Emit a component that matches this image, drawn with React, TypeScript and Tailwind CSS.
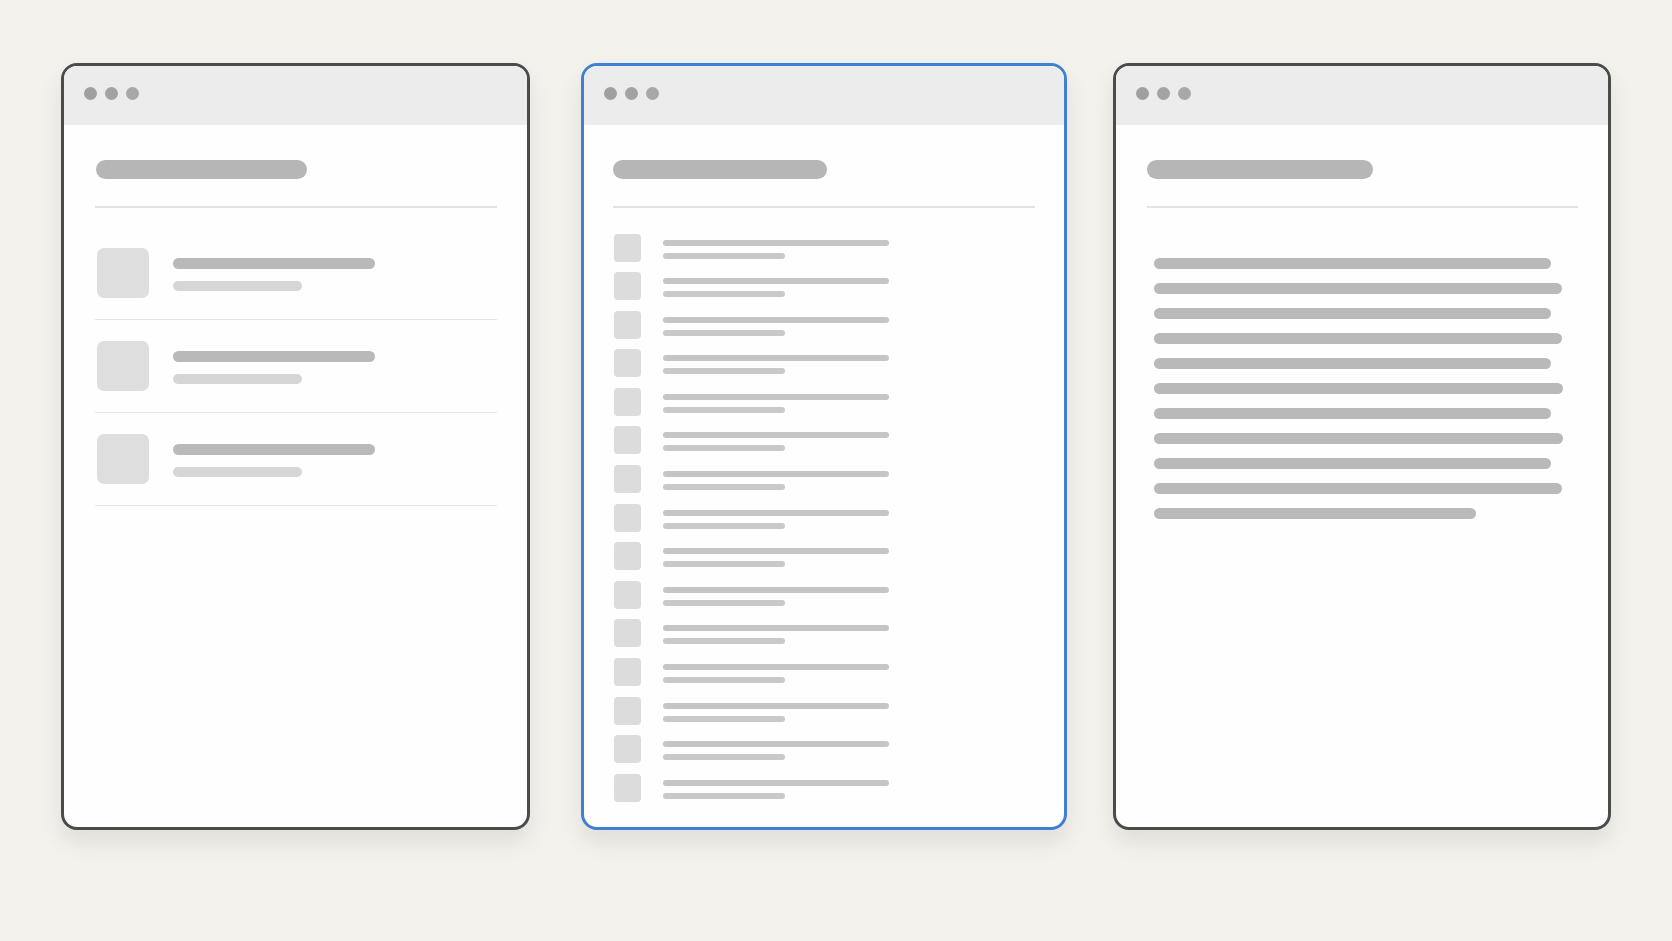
import type { ReactNode } from "react";

const textLineWidths = [397, 408, 397, 408, 397, 409, 397, 409, 397, 408, 322];
const denseRows = Array.from({ length: 15 }, (_, i) => i);
const cardRows = [0, 1, 2];

function WindowFrame({
  selected,
  width,
  children,
}: {
  selected?: boolean;
  width: string;
  children: ReactNode;
}) {
  return (
    <div
      className={`${width} h-[767px] shrink-0 overflow-hidden rounded-[16px] border-[3px] bg-[#fefefe] shadow-[0_12px_22px_rgba(60,50,40,0.10)] ${
        selected ? "border-[#3f80d2]" : "border-[#4b4b4b]"
      }`}
    >
      <div className="flex h-[59px] items-start gap-[8px] bg-[#ececec] pl-[20px] pt-[21px]">
        <span className="h-[13px] w-[13px] rounded-full bg-[#9f9f9f]" />
        <span className="h-[13px] w-[13px] rounded-full bg-[#a3a3a3]" />
        <span className="h-[13px] w-[13px] rounded-full bg-[#a8a8a8]" />
      </div>
      {children}
    </div>
  );
}

function CardListPanel() {
  return (
    <WindowFrame width="w-[469px]">
      <div className="pl-[31px] pr-[30px] pt-[35px]">
        <div className="ml-[1px] h-[19px] w-[211px] rounded-full bg-[#b6b6b6]" />
        <div className="mt-[27px] h-[1.5px] bg-[#e3e3e3]" />
        <div className="mt-[19px]">
          {cardRows.map((row) => (
            <div key={row} className="flex gap-[24px] border-b-[1.5px] border-[#e6e6e6] py-[21px] pl-[2px]">
              <div className="h-[50px] w-[52px] rounded-[7px] bg-[#dedede]" />
              <div className="flex flex-col gap-[12px] pt-[10px]">
                <div className="h-[11px] w-[202px] rounded-full bg-[#b9b9b9]" />
                <div className="h-[10px] w-[129px] rounded-full bg-[#d6d6d6]" />
              </div>
            </div>
          ))}
        </div>
      </div>
    </WindowFrame>
  );
}

function DenseListPanel() {
  return (
    <WindowFrame selected width="w-[486px]">
      <div className="pl-[29px] pr-[29px] pt-[35px]">
        <div className="h-[19px] w-[214px] rounded-full bg-[#b6b6b6]" />
        <div className="mt-[27px] h-[1.5px] bg-[#e3e3e3]" />
        <div className="mt-[26px] flex flex-col gap-[10.6px]">
          {denseRows.map((row) => (
            <div key={row} className="flex h-[28px] gap-[22px] pl-[1px]">
              <div className="h-[28px] w-[27px] rounded-[4px] bg-[#dcdcdc]" />
              <div className="flex flex-col gap-[7px] pt-[6px]">
                <div className="h-[6px] w-[226px] rounded-full bg-[#c5c5c5]" />
                <div className="h-[6px] w-[122px] rounded-full bg-[#c9c9c9]" />
              </div>
            </div>
          ))}
        </div>
      </div>
    </WindowFrame>
  );
}

function ArticlePanel() {
  return (
    <WindowFrame width="w-[498px]">
      <div className="pl-[31px] pr-[30px] pt-[35px]">
        <div className="h-[19px] w-[226px] rounded-full bg-[#b6b6b6]" />
        <div className="mt-[27px] h-[1.5px] bg-[#e3e3e3]" />
        <div className="mt-[50px] flex flex-col gap-[14px] pl-[7px]">
          {textLineWidths.map((w, i) => (
            <div
              key={i}
              className="h-[11px] rounded-full bg-[#b9b9b9]"
              style={{ width: `${w}px` }}
            />
          ))}
        </div>
      </div>
    </WindowFrame>
  );
}

export default function App() {
  return (
    <div className="h-[941px] w-[1672px] overflow-hidden bg-[#f4f2ed] pl-[61px] pt-[63px]">
      <div className="flex items-start">
        <CardListPanel />
        <div className="ml-[51px]">
          <DenseListPanel />
        </div>
        <div className="ml-[46px]">
          <ArticlePanel />
        </div>
      </div>
    </div>
  );
}
